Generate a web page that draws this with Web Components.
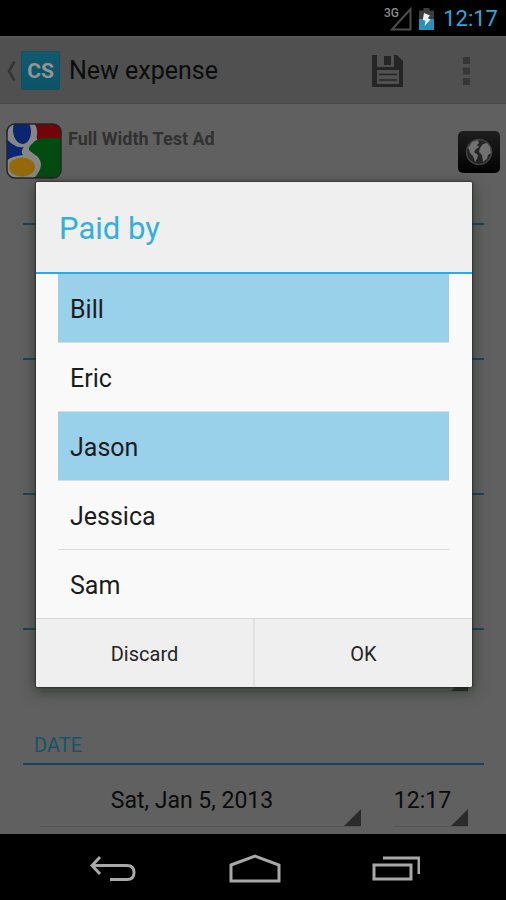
<!DOCTYPE html>
<html lang="en">
<head>
<meta charset="utf-8">
<meta name="viewport" content="width=device-width">
<title>New expense</title>
<style>
html,body{margin:0;height:100%;background:#000}
body{font-family:Roboto,"Liberation Sans",sans-serif;--accent:#33b5e5}
</style>
</head>
<body>
<expense-screen></expense-screen>
<script>
function define(name, html){
  const t = document.createElement('template');
  t.innerHTML = '<style>*{box-sizing:border-box}svg{display:block}button{font:inherit;color:inherit;background:none;border:0;padding:0;margin:0}:focus-visible{outline:2px solid var(--accent)}</style>' + html;
  customElements.define(name, class extends HTMLElement{
    constructor(){
      super();
      this.attachShadow({mode:'open'}).append(t.content.cloneNode(true));
    }
    connectedCallback(){
      const box = this.shadowRoot.querySelector('input[type=checkbox]');
      if(box) box.checked = this.hasAttribute('checked');
    }
  });
}

define('status-bar', `
<style>
:host{display:flex;box-sizing:border-box;flex:none;height:36px;align-items:center;justify-content:flex-end;padding:2px 8px 0;background:#000;color:#2fa9d8}
time{font-size:22px;line-height:34px;margin-left:9px}
</style>
<svg width="28" height="26" viewBox="0 0 28 26" role="img" aria-label="3G signal"><path d="M8 23.500L26.500 3V23.500Z" fill="none" stroke="#4d4d4d" stroke-width="2"/><text x="0" y="11" font-size="12" font-weight="500" fill="#8c8c8c" font-family="Roboto">3G</text></svg>
<svg width="15" height="22" viewBox="0 0 15 22" role="img" aria-label="Battery charging" style="margin-left:7px"><path d="M0 2.500H4.500V0H10.500V2.500H15V11H0Z" fill="#3c3c3c"/><path d="M0 11H15V22H0Z" fill="#2b8fb8"/><path d="M5 5L11 7.500 8.800 10.300 11.500 11.500 5.500 18 6.500 13 3.800 11.800Z" fill="#e6f2f6"/></svg>
<time>12:17</time>`);

define('app-bar', `
<style>
:host{display:flex;box-sizing:border-box;flex:none;height:68px;align-items:center;background:#505050;border-bottom:1px solid #484848;border-top:2px solid #565656;color:#0c0c0c}
.up{display:flex;align-items:center;gap:5px;padding-left:6px}
.logo{width:39px;height:39px;background:linear-gradient(#105b70,#0b5368);border:1px solid #174d5e;border-radius:2px;color:#949494;font-weight:700;font-size:21px;line-height:38px;text-align:center}
h1{flex:1;margin:0 0 0 9px;font-size:25px;font-weight:400;line-height:32px}
.act{width:79px;display:grid;place-items:center;height:64px}
</style>
<button class="up" aria-label="Navigate up"><svg width="10" height="22" viewBox="0 0 10 22"><path d="M8.500 1.500L3 11 8.500 20.500" fill="none" stroke="#343434" stroke-width="2.500"/></svg><span class="logo">CS</span></button>
<h1>New expense</h1>
<button class="act" aria-label="Save"><svg width="32" height="32" viewBox="0 0 32 32"><path fill="#252525" fill-rule="evenodd" d="M0 0H5V12H22V0H25L31 6V32H0ZM5 15V29H27V15ZM12 1H19V10H12Z"/><path d="M7 19.500H25M7 25H25" stroke="#252525" stroke-width="1.500"/></svg></button>
<button class="act" aria-label="More options"><svg width="7" height="28" viewBox="0 0 7 28" fill="#363636"><path d="M0 0H7V7H0ZM0 10.500H7V17.500H0ZM0 21H7V28H0Z"/></svg></button>`);

define('ad-banner', `
<style>
:host{display:flex;box-sizing:border-box;flex:none;height:81px;padding:19px 6px 0;align-items:flex-start}
strong{flex:1;font-size:18px;line-height:22px;margin:5px 0 0 6px;color:#313131;font-weight:700}
button{margin:8px 0 0}
</style>
<svg width="56" height="56" viewBox="0 0 56 56"><defs><clipPath id="r"><rect x="1" y="1" width="54" height="54" rx="8"/></clipPath></defs><g clip-path="url(#r)"><rect width="56" height="56" fill="#868686"/><path d="M30 0H56V17H32Q30 16 31 12Q32 5 28 0Z" fill="#710509"/><path d="M56 15H36Q29 17 27 20Q22 24 23 27Q25 29 31 33Q35 37 35 42Q34 50 27 56H56Z" fill="#044b12"/><path d="M0 15Q4 20 8 22Q12 25 18 24Q14 28 17 32Q6 33 0 38Z" fill="#0b2671"/><ellipse cx="16" cy="8" rx="9" ry="13" fill="#0b2671" transform="rotate(-5 16 8)"/><ellipse cx="16" cy="44" rx="13" ry="9.500" fill="#93690b"/></g><rect x="1" y="1" width="54" height="54" rx="8" fill="none" stroke="#242424" stroke-width="1.500"/></svg>
<strong>Full Width Test Ad</strong>
<button aria-label="Open website"><svg width="42" height="42" viewBox="0 0 42 42"><defs><linearGradient id="g" x2="0" y2="1"><stop stop-color="#1e1e1e"/><stop offset="1" stop-color="#020202"/></linearGradient></defs><rect width="42" height="42" rx="5" fill="url(#g)"/><circle cx="21" cy="21" r="12.500" fill="#242424" stroke="#414141" stroke-width="1.500"/><path fill="#707070" d="M10 17L14 11 20 9 21 12 19 14 21 16 18 18 16 21 20 24 19 28 17 31 15 25 12 22 11 18ZM22 17L25 13 29 12 32 16 33 22 30 24 29 28 25 31 24 24 21 21Z"/></svg></button>`);

define('spinner-button', `
<style>
:host{display:block;height:62px}
button{position:relative;display:block;width:100%;height:100%;padding:8px 0 0;font-size:23px;color:#0b0b0b}
button::before{content:"";position:absolute;left:17px;right:0;bottom:0;height:1px;background:#555}
button::after{content:"";position:absolute;right:0;bottom:1px;width:17px;height:17px;background:#2b2b2b;clip-path:polygon(100% 0,100% 100%,0 100%)}
</style>
<button><slot></slot></button>`);

define('form-section', `
<style>
:host{display:block;box-sizing:border-box;flex:none;height:135px;padding:0 22px 0 23px}
h2{margin:0;height:40px;padding:2px 11px 0;border-bottom:2px solid #174459;font-size:20px;font-weight:400;line-height:36px;color:#155469}
.body{display:flex;gap:16px;padding-right:16px}
::slotted(*){flex:1}
::slotted(.time){flex:0 0 91px}
</style>
<h2><slot name="title"></slot></h2><div class="body"><slot></slot></div>`);

define('check-row', `
<style>
:host{display:block;border-bottom:1px solid #dcdcdc}
:host(:last-of-type){border:0}
label{position:relative;display:flex;align-items:center;height:68px;padding:4px 12px 0;font-size:25px;color:#1c1c1c;cursor:pointer}
input{position:absolute;inset:0;margin:0;width:100%;height:100%;appearance:none}
input:checked{background:#99d0ea}
span{position:relative;pointer-events:none}
</style>
<label><input type="checkbox"><span><slot></slot></span></label>`);

define('choice-dialog', `
<style>
:host{display:block;background:#f9f9f9;border-radius:2px;box-shadow:0 0 2px 1px #222a,0 4px 14px 2px #1b2a1b80}
h2{margin:0;padding:2px 23px 0;height:92px;line-height:90px;background:#efefef;border-bottom:2px solid #2faadb;border-radius:2px 2px 0 0;font-size:31px;font-weight:400;color:#33b0de}
.list{padding:0 23px 0 22px}
footer{display:flex;border-top:1px solid #d8d8d8;background:#efefef;border-radius:0 0 2px 2px}
button{flex:1;height:68px;padding-top:2px;font-size:20px;color:#252525}
button+button{border-left:2px solid #e0e0e0}
</style>
<div role="dialog" aria-labelledby="t"><h2 id="t"><slot name="title"></slot></h2>
<div class="list"><slot></slot></div>
<footer><button>Discard</button><button>OK</button></footer></div>`);

define('system-nav', `
<style>
:host{display:flex;box-sizing:border-box;flex:none;height:66px;background:#000;padding:4px 39px 0 42px}
button{flex:1;display:grid;place-items:center}
svg{fill:none;stroke:#a8a8a8;stroke-width:3}
</style>
<button aria-label="Back"><svg width="46" height="28" viewBox="0 0 46 28"><path d="M10 2L2 10.500 10 19M2 10.500H37Q44 10.500 44 17.500T37 24.500H20"/></svg></button>
<button aria-label="Home"><svg width="52" height="30" viewBox="0 0 52 30"><path d="M2 11L26 2 50 11V27H2Z"/></svg></button>
<button aria-label="Recent apps"><svg width="48" height="28" viewBox="0 0 48 28"><path d="M2 10H39V24H2ZM11 3H47V19"/></svg></button>`);

define('expense-screen', `
<style>
:host{display:flex;flex-direction:column;height:100vh;overflow:hidden}
.stage{position:relative;flex:1;min-height:0;display:flex;flex-direction:column;overflow:hidden;background:#606060}
.overlay{position:absolute;inset:0;display:grid;align-items:center;padding:0 34px 2px 36px}
</style>
<status-bar></status-bar>
<div class="stage">
<app-bar></app-bar>
<ad-banner></ad-banner>
<form-section></form-section>
<form-section></form-section>
<form-section></form-section>
<form-section><spinner-button></spinner-button></form-section>
<form-section><span slot="title">DATE</span><spinner-button>Sat, Jan 5, 2013</spinner-button><spinner-button class="time">12:17</spinner-button></form-section>
<div class="overlay"><choice-dialog><span slot="title">Paid by</span>
<check-row checked>Bill</check-row><check-row>Eric</check-row><check-row checked>Jason</check-row><check-row>Jessica</check-row><check-row>Sam</check-row>
</choice-dialog></div>
</div>
<system-nav></system-nav>`);
</script>
</body>
</html>
